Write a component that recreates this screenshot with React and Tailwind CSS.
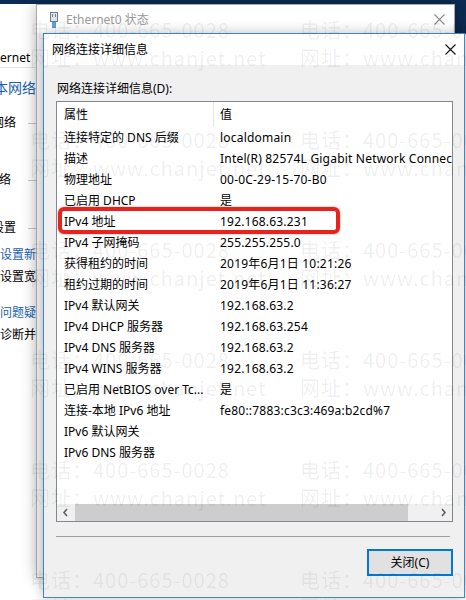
import React from "react";

const ui = { fontFamily: '"Noto Sans", "Noto Sans CJK SC", sans-serif' };
const mark = { fontFamily: '"Noto Sans CJK SC", sans-serif' };

const details = [
  ["连接特定的 DNS 后缀", "localdomain"],
  ["描述", "Intel(R) 82574L Gigabit Network Connection"],
  ["物理地址", "00-0C-29-15-70-B0"],
  ["已启用 DHCP", "是"],
  ["IPv4 地址", "192.168.63.231"],
  ["IPv4 子网掩码", "255.255.255.0"],
  ["获得租约的时间", "2019年6月1日 10:21:26"],
  ["租约过期的时间", "2019年6月1日 11:36:27"],
  ["IPv4 默认网关", "192.168.63.2"],
  ["IPv4 DHCP 服务器", "192.168.63.254"],
  ["IPv4 DNS 服务器", "192.168.63.2"],
  ["IPv4 WINS 服务器", "192.168.63.2"],
  ["已启用 NetBIOS over Tc...", "是"],
  ["连接-本地 IPv6 地址", "fe80::7883:c3c3:469a:b2cd%7"],
  ["IPv6 默认网关", ""],
  ["IPv6 DNS 服务器", ""],
];

function CloseX({ color }) {
  return (
    <svg width="11" height="11" viewBox="0 0 11 11">
      <path d="M0.5 0.5 L10.5 10.5 M10.5 0.5 L0.5 10.5" stroke={color} strokeWidth="1.1" />
    </svg>
  );
}

function EthernetIcon() {
  return (
    <svg width="10" height="16" viewBox="0 0 10 16">
      <rect x="1.5" y="0.5" width="7" height="9" fill="#dfe6ee" stroke="#6f7d8c" />
      <rect x="3" y="2" width="1" height="3" fill="#6f7d8c" />
      <rect x="6" y="2" width="1" height="3" fill="#6f7d8c" />
      <rect x="3" y="10" width="4" height="6" fill="#5fa3dd" />
    </svg>
  );
}

function Chevron({ dir }) {
  const d = dir === "left" ? "M5 1 L2 4.5 L5 8" : "M2 1 L5 4.5 L2 8";
  return (
    <svg width="7" height="9" viewBox="0 0 7 9">
      <path d={d} fill="none" stroke="#606060" strokeWidth="1.6" />
    </svg>
  );
}

// clipped strip of the window sitting behind everything
function BackPane() {
  return (
    <div className="absolute left-0 top-[4px] h-[596px] w-[36px] overflow-hidden bg-white text-[12px] text-black">
      <div className="mt-[44px] flex h-[20px] items-center justify-start overflow-hidden border-b border-[#e3e3e3] leading-[20px]">
        <span className="whitespace-nowrap">ernet</span>
      </div>
      <div className="mt-[10px] flex h-[20px] justify-end overflow-hidden text-[14px] leading-[20px] text-[#1a5fb4]">
        <span className="whitespace-nowrap">基本网络</span>
      </div>
      <SectionHead text="活动网络" mt="mt-[15px]" />
      <SectionHead text="网络" mt="mt-[37px]" width="w-[11px]" />
      <SectionHead text="更改网络设置" mt="mt-[28px]" />
      <div className="mt-[7px] flex h-[20px] justify-end overflow-hidden leading-[20px] text-[#1a5fb4]">
        <span className="whitespace-nowrap">设置新</span>
      </div>
      <div className="mt-[2px] flex h-[20px] justify-end overflow-hidden leading-[20px]">
        <span className="whitespace-nowrap">设置宽</span>
      </div>
      <div className="mt-[16px] flex h-[20px] justify-end overflow-hidden leading-[20px] text-[#1a5fb4]">
        <span className="whitespace-nowrap">问题疑</span>
      </div>
      <div className="mt-[2px] flex h-[20px] justify-end overflow-hidden leading-[20px]">
        <span className="whitespace-nowrap">诊断并</span>
      </div>
    </div>
  );
}

function SectionHead({ text, mt, width = "w-[16px]" }) {
  return (
    <div className={`${mt} flex h-[20px] items-center`}>
      <div className={`flex ${width} justify-end overflow-hidden leading-[20px]`}>
        <span className="whitespace-nowrap">{text}</span>
      </div>
      <div className="ml-auto h-px w-[8px] bg-[#c8c8c8]" />
    </div>
  );
}

function StatusWindow() {
  return (
    <div className="absolute left-[36px] top-[4px] h-[574px] w-[419px] border border-[#a9a9a9] bg-[#f0f0f0] shadow-[0_0_14px_rgba(0,0,0,0.28)]">
      <div className="flex h-[29px] items-center bg-white pl-[12px] pr-[9px]">
        <EthernetIcon />
        <span className="ml-[7px] text-[12px] text-[#9a9a9a]">Ethernet0 状态</span>
        <div className="ml-auto">
          <CloseX color="#8a8a8a" />
        </div>
      </div>
    </div>
  );
}

function DetailsDialog() {
  return (
    <div className="absolute left-[43px] top-[33px] flex h-[565px] w-[422px] flex-col border border-[#3b86d0] bg-[#f0f0f0] shadow-[0_0_12px_rgba(0,0,0,0.25)]">
      <div className="flex h-[31px] shrink-0 items-center justify-between bg-white pl-[8px] pr-[8px]">
        <span className="text-[12px] text-black">网络连接详细信息</span>
        <CloseX color="#111" />
      </div>
      <div className="flex flex-1 flex-col pl-[12px] pr-[11px] pt-[16px]">
        <div className="ml-[1px] h-[16px] text-[12px] leading-[16px] text-black">网络连接详细信息(D):</div>

        <div className="mt-[4px] flex h-[421px] flex-col border border-[#828790] bg-white">
          <div className="flex h-[25px] shrink-0 text-[12px] leading-[25px] text-black">
            <div className="w-[156px] pl-[7px]">属性</div>
            <div className="w-px bg-[#e5e5e5]" />
            <div className="pl-[6px]">值</div>
          </div>
          <div className="flex-1 overflow-hidden">
            {details.map(([k, v]) => (
              <div key={k} className="flex h-[21px] text-[12px] leading-[21px] text-black">
                <div className="w-[157px] shrink-0 whitespace-nowrap pl-[7px]">{k}</div>
                <div className="whitespace-nowrap pl-[6px] tracking-[0.2px]">{v}</div>
              </div>
            ))}
          </div>
          <div className="flex h-[17px] shrink-0 items-center bg-[#f0f0f0]">
            <div className="flex h-full w-[17px] items-center justify-center">
              <Chevron dir="left" />
            </div>
            <div className="ml-[1px] h-full w-[333px] bg-[#cdcdcd]" />
            <div className="ml-auto flex h-full w-[17px] items-center justify-center">
              <Chevron dir="right" />
            </div>
          </div>
        </div>

        <div className="mr-[3px] mt-[14px] h-px bg-[#a0a0a0]" />

        <button className="mt-[12px] flex h-[27px] w-[86px] items-center justify-center self-end border-2 border-[#0078d7] bg-[#e1e1e1] text-[12px] text-black">
          关闭(C)
        </button>
      </div>
    </div>
  );
}

function Watermark() {
  const rows = [0, 1, 2, 3, 4, 5];
  return (
    <div
      className="pointer-events-none absolute inset-0 overflow-hidden pl-[30px] pt-[16px] text-[20px] tracking-[1px] text-[rgba(0,0,0,0.07)]"
      style={mark}
    >
      {rows.map((r) => (
        <div key={r} className="grid h-[110px] grid-cols-[270px_270px]">
          {[0, 1].map((c) => (
            <div key={c} className="flex flex-col whitespace-nowrap leading-[28px]">
              <span>电话：400-665-0028</span>
              <span>网址：www.chanjet.net</span>
            </div>
          ))}
        </div>
      ))}
    </div>
  );
}

export default function App() {
  return (
    <div className="relative h-[600px] w-[466px] overflow-hidden bg-white" style={ui}>
      <div className="absolute left-0 top-0 h-[4px] w-full bg-[#0c2b52]" />
      <div className="absolute right-0 top-0 h-[34px] w-[12px] bg-[#0c2b52]" />
      <BackPane />
      <StatusWindow />
      <DetailsDialog />
      {/* red highlight around the IPv4 address row */}
      <div className="pointer-events-none absolute left-[58px] top-[207px] h-[27px] w-[282px] rounded-[6px] border-[4px] border-[#e4241d] shadow-[0_0_2px_rgba(228,36,29,0.6)]" />
      <Watermark />
    </div>
  );
}
